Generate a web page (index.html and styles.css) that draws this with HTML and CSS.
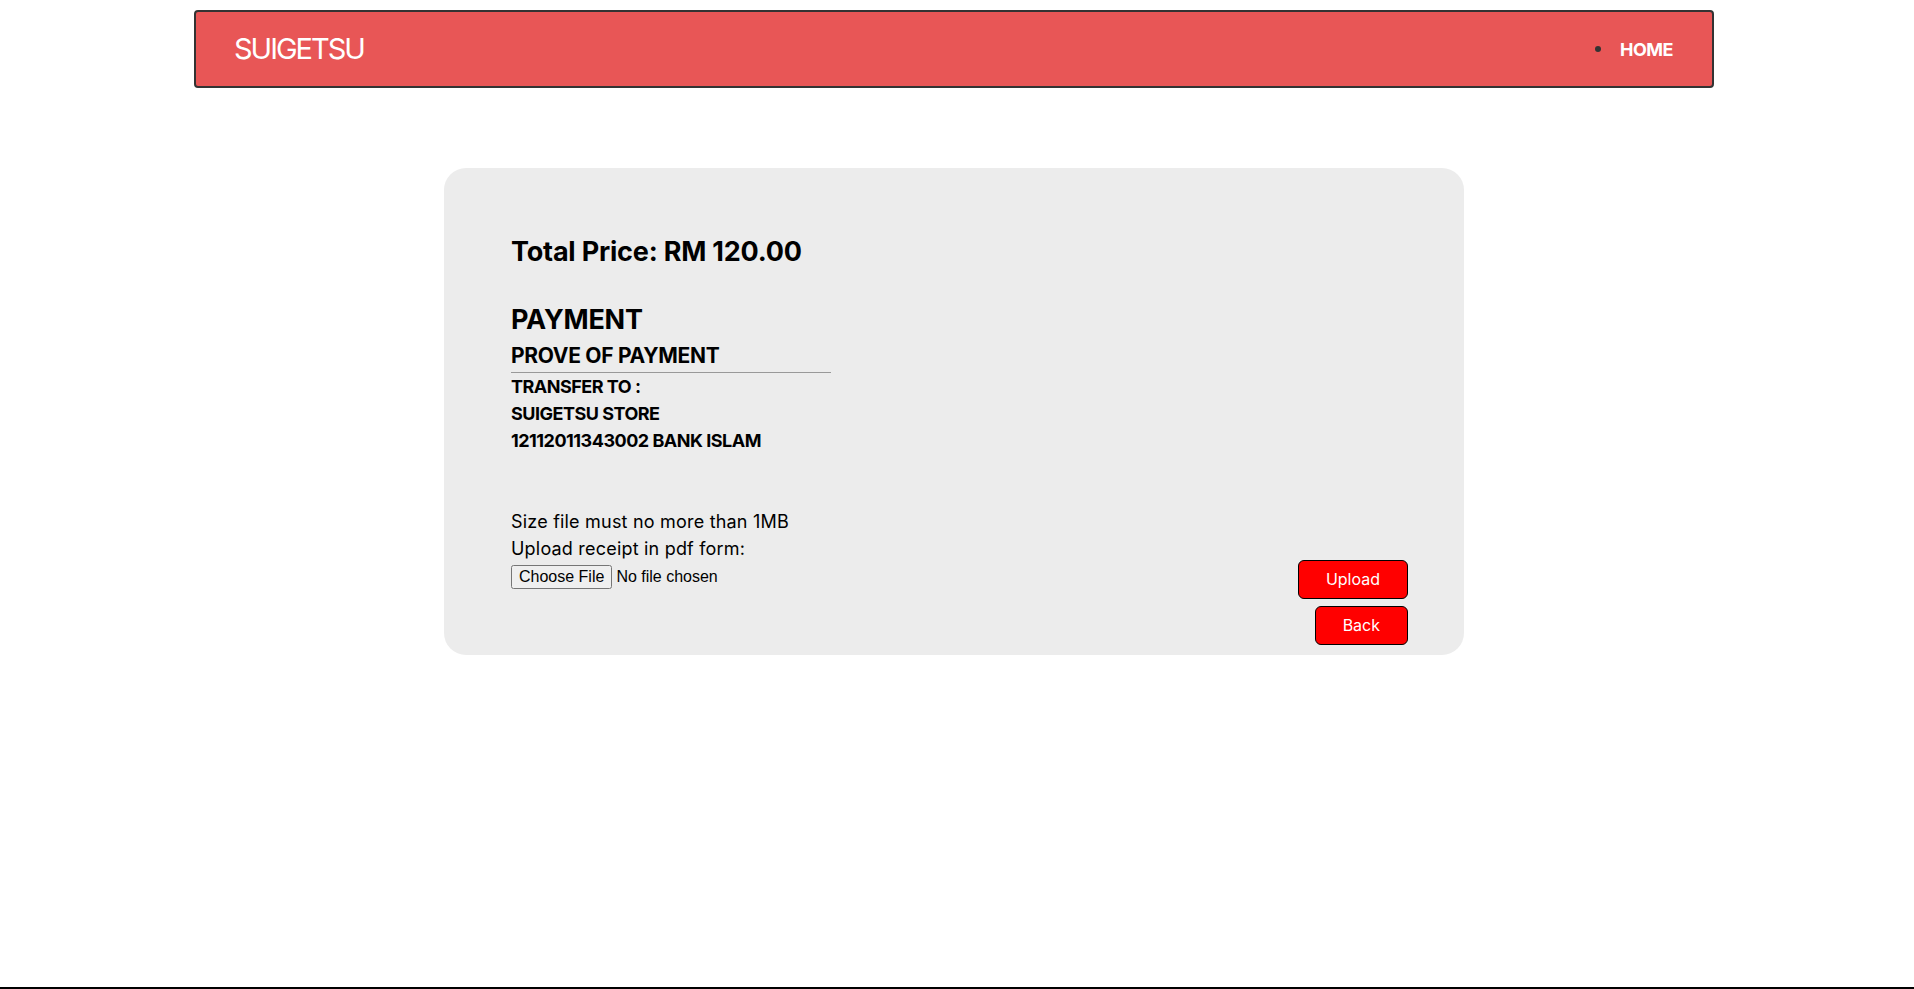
FILE: index.html
```html
<!DOCTYPE html>
<html lang="en">
<head>
<meta charset="utf-8">
<title>Suigetsu - Payment</title>
<link rel="stylesheet" href="styles.css">
</head>
<body>
<div class="page">
  <header class="topbar">
    <div class="brand">SUIGETSU</div>
    <nav class="nav">
      <span class="nav-item"><a class="nav-link" href="#">HOME</a></span>
    </nav>
  </header>

  <main class="card">
    <h2 class="total">Total Price: RM 120.00</h2>
    <h2 class="heading">PAYMENT</h2>
    <h3 class="subheading">PROVE OF PAYMENT</h3>
    <p class="info">TRANSFER TO :</p>
    <p class="info">SUIGETSU STORE</p>
    <p class="info">12112011343002 BANK ISLAM</p>

    <form class="upload-row">
      <div class="upload-left">
        <p class="note">Size file must no more than 1MB</p>
        <p class="note">Upload receipt in pdf form:</p>
        <input class="file-input" type="file" accept="application/pdf">
      </div>
      <div class="actions">
        <button class="btn" type="button">Upload</button>
        <button class="btn" type="button">Back</button>
      </div>
    </form>
  </main>

  <footer class="footer"></footer>
</div>
</body>
</html>
```

FILE: styles.css
```css
* {
  box-sizing: border-box;
}

html, body {
  margin: 0;
  padding: 0;
  background: #ffffff;
}

body {
  font-family: "Inter", "Noto Sans", sans-serif;
  font-size: 18px;
  line-height: 1.5;
  color: #000;
}

.page {
  min-height: 100vh;
  display: flex;
  flex-direction: column;
}

.topbar {
  margin: 10px 0 0 194px;
  width: 1520px;
  height: 78px;
  background: #e85656;
  border: 2px solid #333333;
  border-radius: 4px;
  display: flex;
  align-items: center;
  justify-content: space-between;
  padding: 0 39px 0 38px;
}

.brand {
  color: #ffffff;
  font-size: 29px;
  font-weight: 400;
  letter-spacing: -2px;
}

.nav {
  display: flex;
  align-items: center;
}

.nav-item {
  display: flex;
  align-items: center;
}

.nav-item::before {
  content: "";
  width: 6px;
  height: 6px;
  border-radius: 50%;
  background: #333333;
  margin-right: 19px;
}

.nav-link {
  color: #ffffff;
  text-decoration: none;
  font-weight: 700;
  font-size: 18px;
  letter-spacing: -0.5px;
}

.card {
  margin: 80px 0 0 444px;
  width: 1020px;
  background: #ececec;
  border-radius: 22px;
  padding: 64px 56px 10px 67px;
}

.total,
.heading {
  margin: 0;
  font-size: 27px;
  font-weight: 700;
  line-height: 40.5px;
  letter-spacing: -0.2px;
}

.heading {
  margin-top: 27px;
}

.subheading {
  margin: 0;
  width: 320px;
  font-size: 21px;
  font-weight: 700;
  line-height: 31.5px;
  letter-spacing: -0.3px;
  border-bottom: 1px solid #999999;
}

.info {
  margin: 0;
  font-size: 18px;
  font-weight: 700;
  line-height: 27px;
  letter-spacing: -0.5px;
}

.upload-row {
  margin-top: 54px;
  display: flex;
  justify-content: space-between;
  align-items: flex-start;
}

.note {
  margin: 0;
  font-size: 18px;
  line-height: 27px;
  letter-spacing: 0.2px;
}

.file-input {
  display: block;
  margin-top: 3px;
  font-family: "Liberation Sans", Arial, sans-serif;
  font-size: 16px;
}

.actions {
  padding-top: 52px;
  display: flex;
  flex-direction: column;
  align-items: flex-end;
  gap: 7px;
}

.btn {
  font-family: "Inter", "Noto Sans", sans-serif;
  font-size: 16px;
  line-height: 23px;
  color: #ffffff;
  background: #ff0000;
  border: 1px solid #000000;
  border-radius: 6px;
  padding: 7px 27px;
  cursor: pointer;
}

.footer {
  margin-top: auto;
  height: 2px;
  background: #000000;
}
```
